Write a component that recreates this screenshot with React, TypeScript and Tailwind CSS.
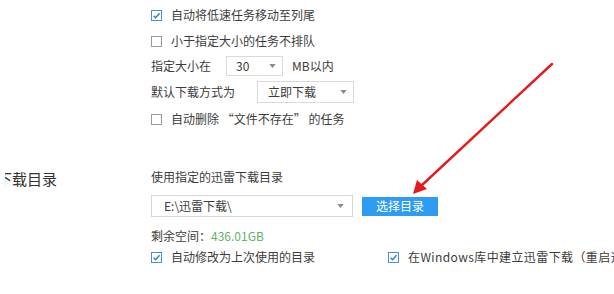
import React from 'react'

const FONT = "font-['Microsoft_YaHei','Noto_Sans_CJK_SC',sans-serif]"

const Checkbox: React.FC<{ checked?: boolean }> = ({ checked }) => (
  <span
    className={`flex h-[11px] w-[11px] shrink-0 items-center justify-center border bg-white ${
      checked ? 'border-[#4a90d9]' : 'border-[#9a9a9a]'
    }`}
  >
    {checked && (
      <svg viewBox="0 0 10 10" className="h-[9px] w-[9px]">
        <path d="M1.8 5.2 L4 7.4 L8.4 2.4" fill="none" stroke="#2f7fd6" strokeWidth="1.6" />
      </svg>
    )}
  </span>
)

const Caret: React.FC = () => (
  <svg viewBox="0 0 8 5" className="h-[4px] w-[7px]">
    <path d="M0 0 H8 L4 5 Z" fill="#8a8a8a" />
  </svg>
)

const CheckRow: React.FC<{ checked?: boolean; label: string; className?: string }> = ({
  checked,
  label,
  className = '',
}) => (
  <div className={`flex items-center gap-[9px] whitespace-nowrap ${className}`}>
    <Checkbox checked={checked} />
    <span>{label}</span>
  </div>
)

export default function App() {
  return (
    <div className={`relative h-[294px] w-[614px] overflow-hidden bg-white text-[12px] text-[#3c3c3c] ${FONT}`}>
      {/* top options */}
      <div className="flex flex-col pl-[151px] pt-[4px]">
        <CheckRow checked label="自动将低速任务移动至列尾" className="h-[22px]" />
        <CheckRow label="小于指定大小的任务不排队" className="h-[30px]" />
        <div className="flex h-[20px] items-center">
          <span className="w-[75px]">指定大小在</span>
          <div className="flex h-[20px] w-[57px] items-center justify-between border border-[#dadada] pl-[9px] pr-[6px]">
            <span>30</span>
            <Caret />
          </div>
          <span className="ml-[9px]">MB以内</span>
        </div>
        <div className="flex h-[32px] items-center">
          <span className="w-[106px]">默认下载方式为</span>
          <div className="flex h-[22px] w-[97px] items-center justify-between border border-[#dadada] pl-[10px] pr-[6px]">
            <span>立即下载</span>
            <Caret />
          </div>
        </div>
        <CheckRow label="自动删除 “文件不存在” 的任务" className="h-[22px]" />
      </div>

      {/* download directory */}
      <div className="mt-[36px] flex">
        <div className="w-[151px] shrink-0 pl-[5px] pt-[3px]">
          <div className="overflow-hidden whitespace-nowrap text-[15px] leading-[20px] text-[#333]">
            <span className="ml-[-8px]">下载目录</span>
          </div>
        </div>
        <div className="flex flex-col">
          <div className="flex h-[22px] items-center">使用指定的迅雷下载目录</div>
          <div className="mt-[7px] flex h-[22px] items-center">
            <div className="flex h-[22px] w-[202px] items-center justify-between border border-[#d6d6d6] pl-[12px] pr-[8px]">
              <span>E:\迅雷下载\</span>
              <Caret />
            </div>
            <button
              type="button"
              className="ml-[9px] flex h-[19px] w-[76px] items-center justify-center bg-[#2d9cf2] text-[12px] text-white"
            >
              选择目录
            </button>
          </div>
          <div className="mt-[9px] flex h-[20px] items-center">
            <span>剩余空间：</span>
            <span className="text-[#5bb55e]">436.01GB</span>
          </div>
          <div className="flex h-[22px] items-center">
            <CheckRow checked label="自动修改为上次使用的目录" className="w-[237px] shrink-0" />
            <CheckRow checked label="在Windows库中建立迅雷下载（重启迅雷后生效）" className="tracking-[0.4px]" />
          </div>
        </div>
      </div>

      {/* red arrow annotation */}
      <svg className="pointer-events-none absolute left-0 top-0" width="614" height="294" viewBox="0 0 614 294">
        <line x1="552" y1="64" x2="421" y2="186" stroke="#e51b1b" strokeWidth="2.4" strokeLinecap="round" />
        <polygon points="413,194 417,180 427,189" fill="#e51b1b" />
      </svg>
    </div>
  )
}
